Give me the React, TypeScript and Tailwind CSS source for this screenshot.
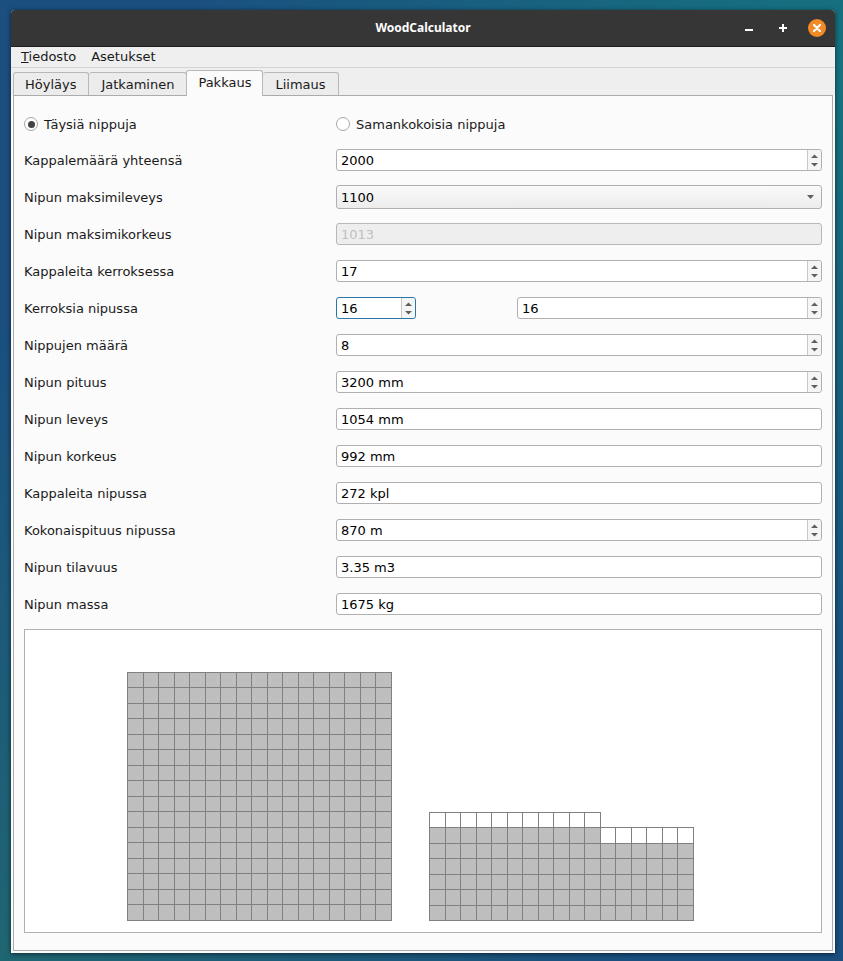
import React from 'react';

type RowKind = 'spin' | 'text' | 'combo' | 'disabled' | 'double';

interface Row {
  label: string;
  value: string;
  kind: RowKind;
}

const rows: Row[] = [
  { label: 'Kappalemäärä yhteensä', value: '2000', kind: 'spin' },
  { label: 'Nipun maksimileveys', value: '1100', kind: 'combo' },
  { label: 'Nipun maksimikorkeus', value: '1013', kind: 'disabled' },
  { label: 'Kappaleita kerroksessa', value: '17', kind: 'spin' },
  { label: 'Kerroksia nipussa', value: '16', kind: 'double' },
  { label: 'Nippujen määrä', value: '8', kind: 'spin' },
  { label: 'Nipun pituus', value: '3200 mm', kind: 'spin' },
  { label: 'Nipun leveys', value: '1054 mm', kind: 'text' },
  { label: 'Nipun korkeus', value: '992 mm', kind: 'text' },
  { label: 'Kappaleita nipussa', value: '272 kpl', kind: 'text' },
  { label: 'Kokonaispituus nipussa', value: '870 m', kind: 'spin' },
  { label: 'Nipun tilavuus', value: '3.35 m3', kind: 'text' },
  { label: 'Nipun massa', value: '1675 kg', kind: 'text' },
];

const tabs = ['Höyläys', 'Jatkaminen', 'Pakkaus', 'Liimaus'];

const SpinArrows = () => (
  <svg width="7" height="13" viewBox="0 0 7 13" className="fill-[#5f5f5f]">
    <path d="M3.5 0.5 L7 4 H0 Z" />
    <path d="M0 9 H7 L3.5 12.5 Z" />
  </svg>
);

const SpinBox = ({ value, focused, className }: { value: string; focused?: boolean; className: string }) => (
  <div
    className={`flex h-[22px] items-center rounded-[3px] border bg-white text-black ${
      focused ? 'border-[#2a76a8]' : 'border-[#b0b0b0]'
    } ${className}`}
  >
    <span className="flex-1 pl-1 pt-[2px]">{value}</span>
    <div className="flex h-full w-[14px] items-center justify-center rounded-r-[3px] border-l border-[#c8c8c8] bg-[#f5f5f5]">
      <SpinArrows />
    </div>
  </div>
);

const Radio = ({ checked, label }: { checked?: boolean; label: string }) => (
  <div className="flex items-center gap-[6px]">
    <div className="flex h-[14px] w-[14px] items-center justify-center rounded-full border border-[#a8a8a8] bg-white">
      {checked && <div className="h-[7px] w-[7px] rounded-full bg-[#444444]" />}
    </div>
    <span className="pt-[2px]">{label}</span>
  </div>
);

const Field = ({ row }: { row: Row }) => {
  if (row.kind === 'spin') return <SpinBox value={row.value} className="w-[486px]" />;
  if (row.kind === 'double') {
    return (
      <div className="flex w-[486px] justify-between">
        <SpinBox value={row.value} focused className="w-[80px]" />
        <SpinBox value={row.value} className="w-[305px]" />
      </div>
    );
  }
  if (row.kind === 'combo') {
    return (
      <div className="flex h-[24px] w-[486px] items-center rounded-[3px] border border-[#b0b0b0] bg-gradient-to-b from-[#fafafa] to-[#ececec] pl-1 text-black">
        <span className="flex-1 pt-[2px]">{row.value}</span>
        <svg width="7" height="4" viewBox="0 0 7 4" className="mr-[7px] fill-[#5f5f5f]">
          <path d="M0 0 H7 L3.5 4 Z" />
        </svg>
      </div>
    );
  }
  if (row.kind === 'disabled') {
    return (
      <div className="flex h-[22px] w-[486px] items-center rounded-[3px] border border-[#b8b8b8] bg-[#eeeeee] pl-1 pt-[2px] text-[#c0c0c0]">
        {row.value}
      </div>
    );
  }
  return (
    <div className="flex h-[22px] w-[486px] items-center rounded-[3px] border border-[#b0b0b0] bg-white pl-1 pt-[2px] text-black">
      {row.value}
    </div>
  );
};

// cell edges step 15.5px, the widget rounds columns up and rows down
const colX = (c: number) => Math.ceil(c * 15.5);
const rowY = (r: number) => Math.floor(r * 15.5);

interface CellsProps {
  x: number;
  top: number;
  cols: [number, number];
  rows: [number, number];
  fill: string;
}

const Cells = ({ x, top, cols, rows: rowRange, fill }: CellsProps) => {
  const cells = [];
  for (let r = rowRange[0]; r < rowRange[1]; r++) {
    for (let c = cols[0]; c < cols[1]; c++) {
      cells.push(
        <rect
          key={`${r}-${c}`}
          x={x + colX(c) + 0.5}
          y={top + rowY(r) + 0.5}
          width={colX(c + 1) - colX(c)}
          height={rowY(r + 1) - rowY(r)}
          fill={fill}
          stroke="#808080"
          strokeWidth="1"
        />,
      );
    }
  }
  return <>{cells}</>;
};

const App = () => {
  return (
    <div
      className="h-[961px] w-[843px] overflow-hidden bg-[#1a4f80] bg-[radial-gradient(circle_at_100%_8%,#16737f_0%,rgba(22,115,127,0)_55%),radial-gradient(circle_at_0%_100%,#1f6672_0%,rgba(31,102,114,0)_50%)] pl-[11px] pt-[10px] text-[13px] text-[#1a1a1a]"
      style={{ fontFamily: '"DejaVu Sans", sans-serif' }}
    >
      <div className="flex h-[943px] w-[824px] flex-col rounded-t-[4px] bg-[#efefef] shadow-[0_1px_5px_rgba(0,0,0,0.6)]">
        {/* Title bar */}
        <div className="flex h-[37px] items-center justify-between rounded-t-[4px] border-b border-[#1f1f1f] bg-[#363636] px-[9px]">
          <div className="w-[100px]" />
          <span
            className="text-[12px] font-bold text-white"
            style={{ fontFamily: '"Noto Sans", sans-serif' }}
          >
            WoodCalculator
          </span>
          <div className="flex w-[100px] items-center justify-end">
            <div className="mr-[26px] mt-[4px] h-[2px] w-[8px] bg-white" />
            <svg width="8" height="8" viewBox="0 0 8 8" className="mr-[21px] fill-white">
              <path d="M3 0 H5 V3 H8 V5 H5 V8 H3 V5 H0 V3 H3 Z" />
            </svg>
            <div className="flex h-[18px] w-[18px] items-center justify-center rounded-full bg-[#f28a26]">
              <svg width="10" height="10" viewBox="0 0 10 10" className="stroke-white" strokeWidth="2.2" strokeLinecap="round">
                <path d="M2 2 L8 8 M8 2 L2 8" />
              </svg>
            </div>
          </div>
        </div>

        {/* Menu */}
        <div className="flex h-[21px] items-center gap-[15px] border-b border-[#d4d4d4] pl-[10px]">
          <span>
            <span className="underline">T</span>iedosto
          </span>
          <span>Asetukset</span>
        </div>

        {/* Tabs */}
        <div className="flex h-[27px] items-end pl-[2px]">
          {tabs.map((t) => (
            <div
              key={t}
              className={
                t === 'Pakkaus'
                  ? 'z-10 -mb-px -ml-px flex h-[26px] items-center rounded-t-[3px] border border-b-0 border-[#b8b8b8] bg-[#fbfbfb] pb-[2px] pl-[11px] pr-[11px]'
                  : 'flex h-[23px] items-center rounded-t-[3px] border border-b-0 border-l-0 border-[#b8b8b8] bg-[#ececec] px-[12px] pt-[2px] first:border-l first:pl-[11px]'
              }
            >
              {t}
            </div>
          ))}
        </div>

        {/* Pane */}
        <div className="flex-1 bg-[#fafafa] px-[2px] pb-[2px]">
          <div className="flex h-[856px] flex-col border border-[#ababab] bg-[#fbfbfb] px-[10px] pt-[17px]">
            <div className="flex h-[22px] items-center">
              <div className="w-[312px]">
                <Radio checked label="Täysiä nippuja" />
              </div>
              <Radio label="Samankokoisia nippuja" />
            </div>
            <div className="mt-[14px] flex flex-col gap-[15px]">
              {rows.map((row) => (
                <div key={row.label} className="flex h-[22px] items-center">
                  <span className="w-[312px] pt-[2px]">{row.label}</span>
                  <Field row={row} />
                </div>
              ))}
            </div>
            <div className="mt-[14px] h-[304px] w-[798px] border border-[#b0b0b0] bg-white">
              <svg width="796" height="302" viewBox="0 0 796 302">
                <Cells x={102} top={42} cols={[0, 17]} rows={[0, 16]} fill="#bebebe" />
                <Cells x={404} top={182} cols={[0, 11]} rows={[0, 1]} fill="#ffffff" />
                <Cells x={404} top={182} cols={[11, 17]} rows={[1, 2]} fill="#ffffff" />
                <Cells x={404} top={182} cols={[0, 11]} rows={[1, 2]} fill="#bebebe" />
                <Cells x={404} top={182} cols={[0, 17]} rows={[2, 7]} fill="#bebebe" />
              </svg>
            </div>
          </div>
        </div>
      </div>
    </div>
  );
};

export default App;
